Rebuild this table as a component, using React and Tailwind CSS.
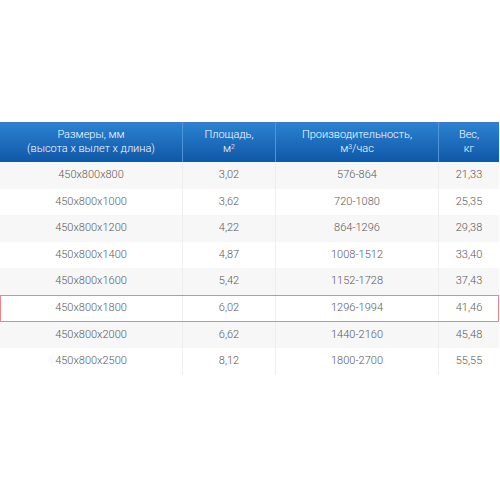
const rows = [
  ["450x800x800", "3,02", "576-864", "21,33"],
  ["450x800x1000", "3,62", "720-1080", "25,35"],
  ["450x800x1200", "4,22", "864-1296", "29,38"],
  ["450x800x1400", "4,87", "1008-1512", "33,40"],
  ["450x800x1600", "5,42", "1152-1728", "37,43"],
  ["450x800x1800", "6,02", "1296-1994", "41,46"],
  ["450x800x2000", "6,62", "1440-2160", "45,48"],
  ["450x800x2500", "8,12", "1800-2700", "55,55"],
];

const cols = "grid grid-cols-[183px_93px_163px_1fr]";

export default function App() {
  return (
    <div className="w-[500px] h-[500px] bg-white pt-[122px] font-['Roboto','Liberation_Sans',sans-serif]">
      <div className="w-[499px]">
        <div className={`${cols} h-[40px] bg-gradient-to-b from-[#2c83d3] to-[#0f58a6] text-white text-[11px] leading-[14px] font-light`}>
          <div className="flex flex-col items-center justify-center border-r border-[#4f95d8]">
            <span>Размеры, мм</span>
            <span>(высота х вылет х длина)</span>
          </div>
          <div className="flex flex-col items-center justify-center border-r border-[#4f95d8]">
            <span>Площадь,</span>
            <span>м<sup className="text-[7px]">2</sup></span>
          </div>
          <div className="flex flex-col items-center justify-center border-r border-[#4f95d8]">
            <span>Производительность,</span>
            <span>м<sup className="text-[7px]">3</sup>/час</span>
          </div>
          <div className="flex flex-col items-center justify-center">
            <span>Вес,</span>
            <span>кг</span>
          </div>
        </div>
        {rows.map((r, i) => (
          <div
            key={i}
            className={`${cols} h-[26.6px] text-[11px] text-[#5a5a5a] font-light ${i % 2 === 0 ? "bg-[#f7f7f7]" : "bg-white"} ${i === 5 ? "outline outline-1 -outline-offset-1 outline-[#de8a8a] relative" : ""}`}
          >
            <div className="flex items-center justify-center border-r border-[#eeeeee]">{r[0]}</div>
            <div className="flex items-center justify-center border-r border-[#eeeeee]">{r[1]}</div>
            <div className="flex items-center justify-center border-r border-[#eeeeee]">{r[2]}</div>
            <div className="flex items-center justify-center">{r[3]}</div>
          </div>
        ))}
      </div>
    </div>
  );
}
